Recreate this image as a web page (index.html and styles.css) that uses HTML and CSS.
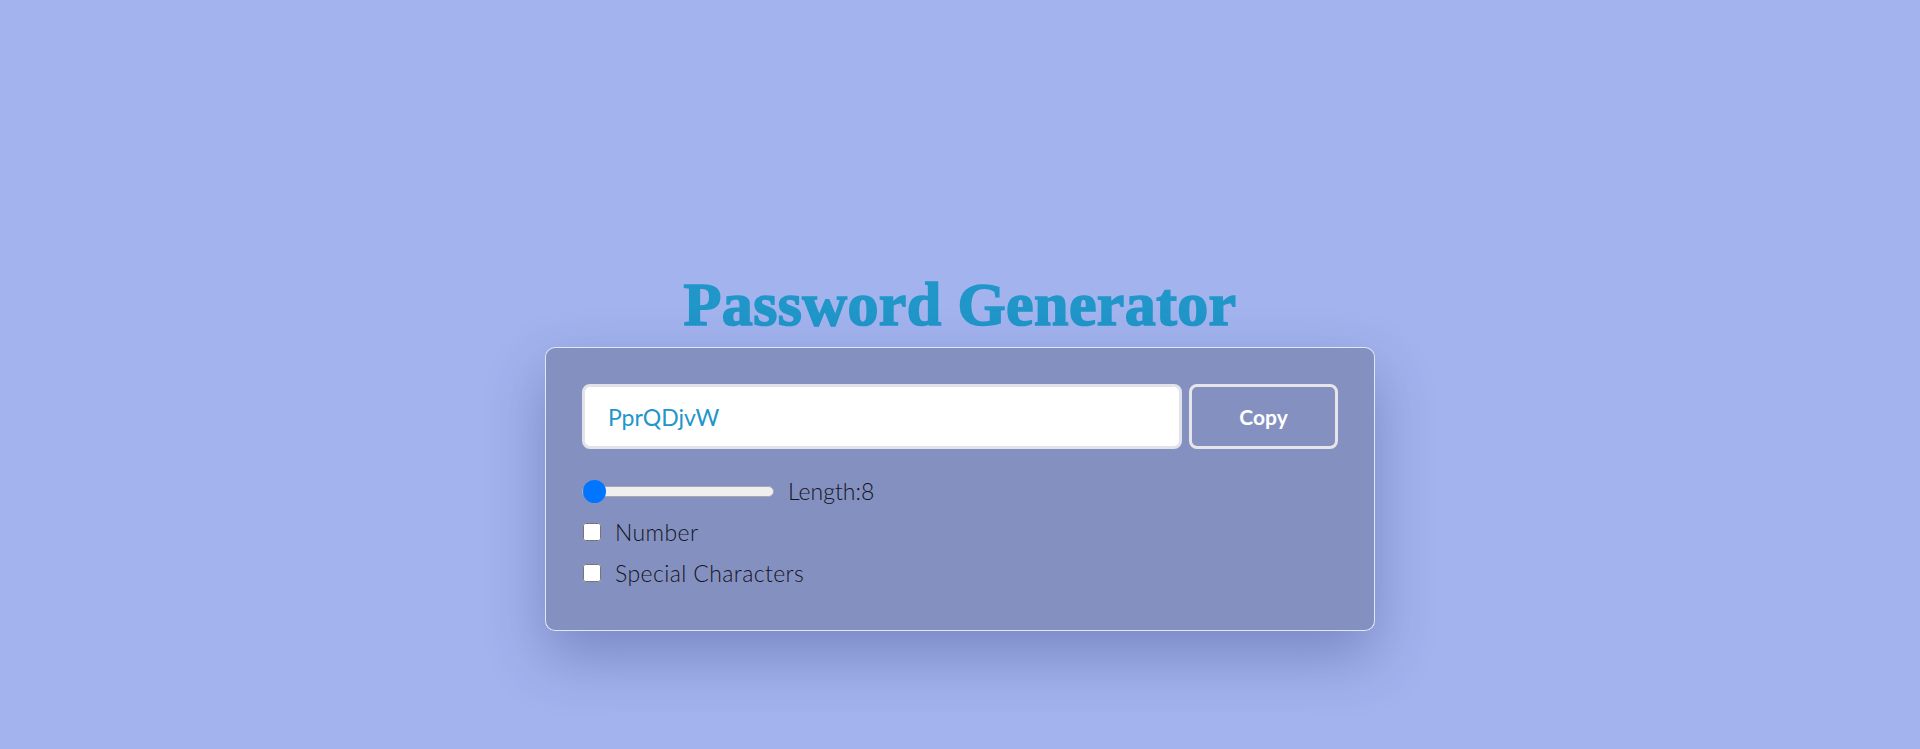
FILE: index.html
```html
<!DOCTYPE html>
<html lang="en">
<head>
<meta charset="utf-8">
<title>Password Generator</title>
<link rel="stylesheet" href="styles.css">
</head>
<body>
<main class="page">
  <h1 class="title">Password Generator</h1>
  <section class="card">
    <div class="output-row">
      <input class="output" type="text" value="PprQDjvW" readonly>
      <button class="copy-btn" type="button">Copy</button>
    </div>
    <div class="options">
      <div class="option">
        <input class="range" type="range" min="8" max="30" value="8">
        <label class="length-label">Length:8</label>
      </div>
      <div class="option">
        <input class="check" type="checkbox" id="num">
        <label class="opt-label" for="num">Number</label>
      </div>
      <div class="option">
        <input class="check" type="checkbox" id="spec">
        <label class="opt-label" for="spec">Special Characters</label>
      </div>
    </div>
  </section>
</main>
</body>
</html>
```

FILE: styles.css
```css
* { box-sizing: border-box; }

html, body {
  margin: 0;
  height: 100%;
}

body {
  background: #a2b3ee;
  font-family: "Lato", "Open Sans", sans-serif;
  overflow: hidden;
}

.page {
  display: flex;
  flex-direction: column;
  align-items: center;
  padding-top: 273px;
}

.title {
  margin: 0 0 12px;
  font-family: "Liberation Serif", serif;
  font-weight: 700;
  font-size: 62px;
  line-height: 1;
  letter-spacing: 0.4px;
  color: #2196c9;
  -webkit-text-stroke: 1.6px #2196c9;
}

.card {
  width: 830px;
  padding: 36px 36px 46px;
  background: #8491c0;
  border: 1px solid rgba(240, 244, 255, 0.85);
  border-radius: 10px;
  box-shadow: 0 25px 60px rgba(40, 50, 110, 0.33);
}

.output-row {
  display: flex;
  gap: 7px;
  height: 65px;
}

.output {
  flex: 1;
  min-width: 0;
  height: 65px;
  border: 3px solid #e2e3ea;
  border-radius: 8px;
  background: #fff;
  padding: 0 23px;
  font-family: "Lato", sans-serif;
  font-size: 23px;
  color: #2196c9;
  outline: none;
}

.copy-btn {
  width: 149px;
  height: 65px;
  background: transparent;
  border: 3px solid #e6e6ea;
  border-radius: 8px;
  color: #fff;
  font-family: "Lato", sans-serif;
  font-weight: 700;
  font-size: 21px;
}

.options {
  display: flex;
  flex-direction: column;
  gap: 19px;
  margin-top: 31px;
}

.option {
  display: flex;
  align-items: center;
  height: 22px;
}

.range {
  -webkit-appearance: none;
  appearance: none;
  width: 192px;
  height: 23px;
  margin: 0;
  background: transparent;
}

.range::-webkit-slider-runnable-track {
  height: 11px;
  background: #efefef;
  border: 1px solid #a8a8b0;
  border-radius: 6px;
}

.range::-webkit-slider-thumb {
  -webkit-appearance: none;
  appearance: none;
  width: 23px;
  height: 23px;
  border-radius: 50%;
  background: #0075ff;
  border: none;
  margin-top: -7px;
}

.length-label {
  margin-left: 14px;
  font-size: 23px;
  font-weight: 300;
  color: #14141f;
}

.check {
  width: 18px;
  height: 18px;
  margin: 0 14px 0 1px;
}

.opt-label {
  font-size: 23px;
  font-weight: 300;
  letter-spacing: 0.4px;
  color: #14141f;
}
```
